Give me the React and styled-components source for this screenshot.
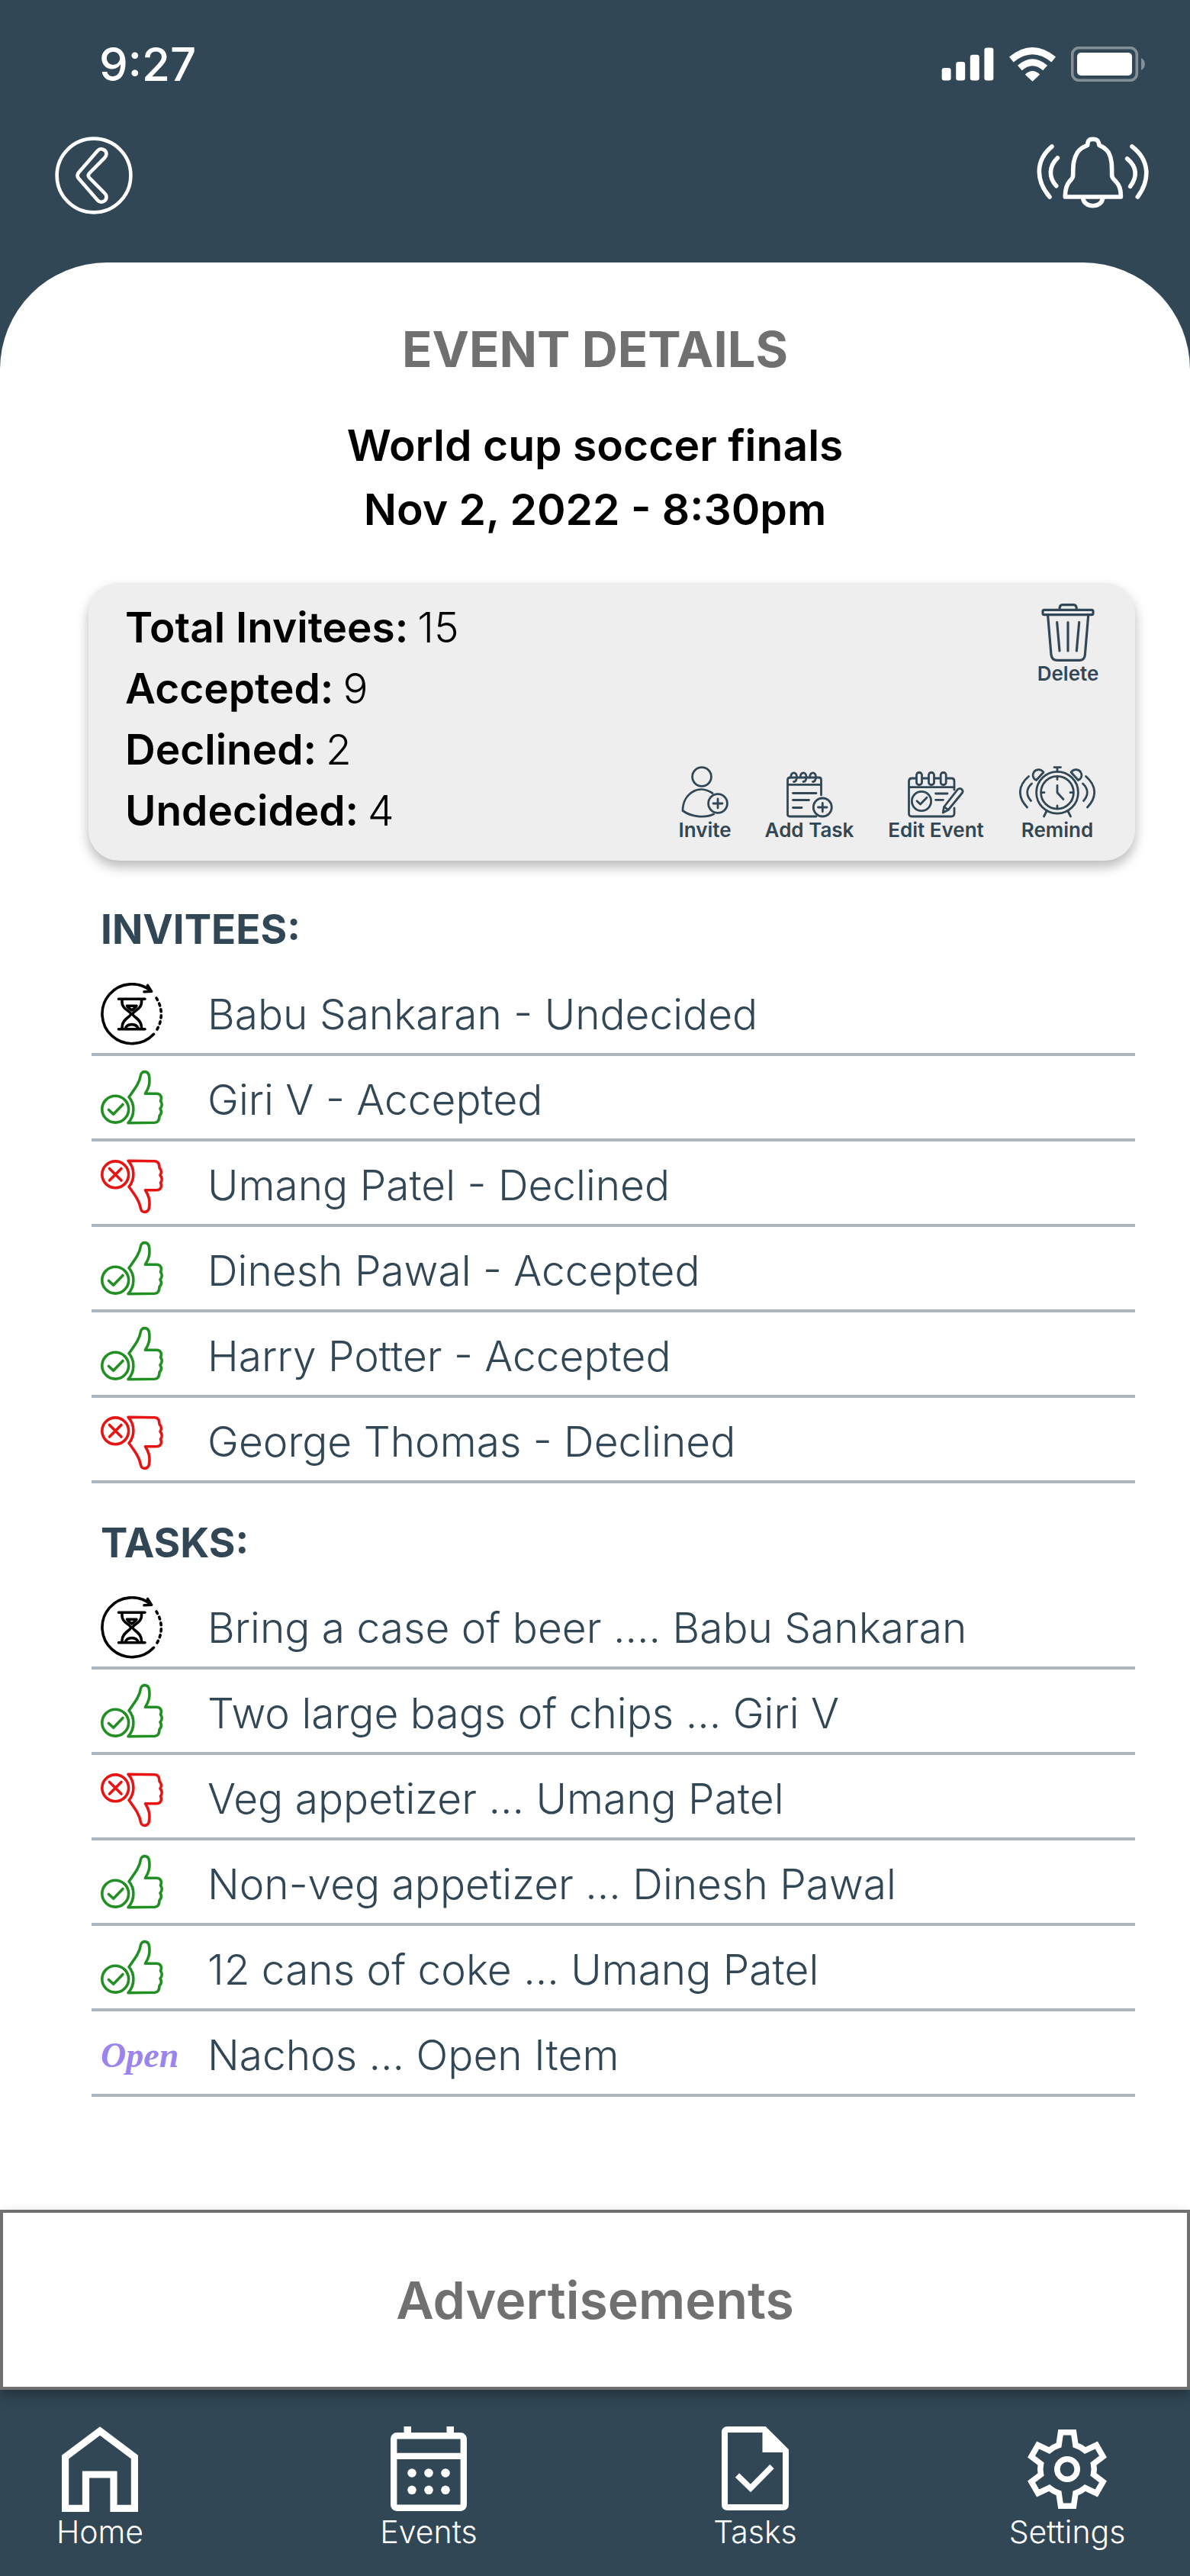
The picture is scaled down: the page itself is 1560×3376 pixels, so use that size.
import styled, { createGlobalStyle } from "styled-components";

const NAVY = "#314755";
const GREY = "#707070";

const invitees = [
    { status: "undecided", text: "Babu Sankaran - Undecided" },
    { status: "accepted", text: "Giri V - Accepted" },
    { status: "declined", text: "Umang Patel - Declined" },
    { status: "accepted", text: "Dinesh Pawal - Accepted" },
    { status: "accepted", text: "Harry Potter - Accepted" },
    { status: "declined", text: "George Thomas - Declined" },
];

const tasks = [
    { status: "undecided", text: "Bring a case of beer .... Babu Sankaran" },
    { status: "accepted", text: "Two large bags of chips ... Giri V" },
    { status: "declined", text: "Veg appetizer ... Umang Patel" },
    { status: "accepted", text: "Non-veg appetizer ... Dinesh Pawal" },
    { status: "accepted", text: "12 cans of coke ... Umang Patel" },
    { status: "open", text: "Nachos ... Open Item" },
];

const stats = [
    { label: "Total Invitees:", value: 15 },
    { label: "Accepted:", value: 9 },
    { label: "Declined:", value: 2 },
    { label: "Undecided:", value: 4 },
];

/* ---------- icons ---------- */

const SignalIcon = () => (
    <svg width="69" height="44" viewBox="222 186 208 132" fill="#fff">
        <rect x="224" y="267" width="36" height="50" rx="10" />
        <rect x="280" y="243" width="36" height="74" rx="10" />
        <rect x="336" y="215" width="36" height="102" rx="10" />
        <rect x="392" y="187" width="36" height="130" rx="10" />
    </svg>
);

const WifiIcon = () => (
    <svg width="63" height="45" viewBox="486 183 188 135" fill="none">
        <path d="M497 231Q580 163 663 231" stroke="#fff" strokeWidth="27" />
        <path d="M530 264Q580 220 630 264" stroke="#fff" strokeWidth="26" />
        <path d="M551 290Q580 262 609 290L580 317Z" fill="#fff" />
    </svg>
);

const BatteryIcon = () => (
    <svg width="98" height="46" viewBox="732 183 294 138" fill="none">
        <rect
            x="737"
            y="188"
            width="254"
            height="128"
            rx="27"
            stroke="#fff"
            strokeOpacity="0.4"
            strokeWidth="11"
        />
        <rect x="756" y="207" width="216" height="90" rx="15" fill="#fff" />
        <path d="M1008 228A27 27 0 0 1 1008 276Z" fill="#fff" fillOpacity="0.4" />
    </svg>
);

const BackIcon = () => (
    <svg width="102" height="102" viewBox="0 0 102 102" fill="none" stroke="#fff" strokeWidth="4.6">
        <circle cx="51" cy="51" r="48.4" />
        <path d="M56 18.5C60 14 67.5 17 67.5 22.8C67.5 25 66.5 26.5 65 28L45 48.2Q42.6 51 45 53.8L65 74C66.5 75.5 67.5 77 67.5 79.2C67.5 85 60 88 56 83.5L31 54.8Q28 51 31 47.2Z" />
    </svg>
);

const BellIcon = () => (
    <svg
        width="148"
        height="102"
        viewBox="597 537 444 306"
        fill="none"
        stroke="#fff"
        strokeWidth="17"
        strokeLinecap="round"
        strokeLinejoin="round"
    >
        <path d="M709 774H928C928 742 922 728 908 713C898 703 893 699 893 690C893 650 893 625 880 600C870 584 860 578 843 571C841 560 840 547 818 547C798 547 798 558 797 571C780 577 768 583 757 600C741 625 740 650 740 690C740 699 735 704 728 711C713 727 709 745 709 774Z" />
        <path d="M779 777C781 820 855 820 857 777" />
        <path d="M657 576C592 630 592 708 648 774" />
        <path d="M679 621C644 655 644 698 674 731" />
        <path d="M972 576C1042 630 1044 706 994 774" />
        <path d="M953 624C992 656 994 694 965 733" />
    </svg>
);

const TrashIcon = () => (
    <svg
        width="70"
        height="76"
        viewBox="201 93 210 228"
        fill="none"
        stroke={NAVY}
        strokeWidth="9.5"
        strokeLinecap="round"
    >
        <rect x="207" y="118" width="198" height="19" rx="6" />
        <path d="M273 115Q273 98 285 98H328Q340 98 340 115" />
        <path d="M227 140L240 295Q243 316 262 316H350Q371 316 373 295L386 140" />
        <path d="M263 167L273 279M306 167V279M350 167L340 279" />
    </svg>
);

const ActionSvg = ({ width, height, children }) => (
    <svg
        width={width}
        height={height}
        viewBox={`0 0 ${width} ${height}`}
        fill="none"
        stroke={NAVY}
        strokeWidth="2.8"
        strokeLinecap="round"
        strokeLinejoin="round"
    >
        {children}
    </svg>
);

const InviteIcon = () => (
    <ActionSvg width={62} height={68}>
        <circle cx="27" cy="14" r="12.4" />
        <path d="M41 35.5C22 22.5 2 37 2 58.5C13 66.5 31 68.5 42.5 63" />
        <circle cx="48" cy="49" r="12.4" />
        <path d="M42 49H54M48 43V55" />
    </ActionSvg>
);

const AddTaskIcon = () => (
    <ActionSvg width={61} height={61}>
        <path d="M45.5 31V11Q45.5 8 42.5 8H4.5Q1.5 8 1.5 11V56Q1.5 59 4.5 59H39M2 17.3H45" />
        <path d="M5.5 8C6 0 13.5 0 13.5 7C13.5 11 12.5 13.5 9.5 13.5M18 8C18.5 0 26 0 26 7C26 11 25 13.5 22 13.5M30.5 8C31 0 38.5 0 38.5 7C38.5 11 37.5 13.5 34.5 13.5" />
        <path d="M8.5 28.5H39M8.5 37.5H29.5M8.5 47.5H20" />
        <circle cx="47.3" cy="47" r="12" />
        <path d="M41.5 47H53M47.3 41.3V52.7" />
    </ActionSvg>
);

const EditEventIcon = () => (
    <ActionSvg width={74} height={61}>
        <path d="M10 9H5Q1.5 9 1.5 13V55Q1.5 59 5.5 59H57Q61 59 61 55V48M61 24V13Q61 9 57.5 9H52M20 9H26.5M35.5 9H42M2 20.7H60.5" />
        <rect x="11.5" y="1.5" width="7" height="16" rx="3" />
        <rect x="27.5" y="1.5" width="7" height="16" rx="3" />
        <rect x="43.2" y="1.5" width="7" height="16" rx="3" />
        <circle cx="18" cy="39" r="12.6" />
        <path d="M12 38.8L16.5 43L25 34.2M36.5 29H52M36.5 37.3H46.5" />
        <path d="M46.2 54L47.5 46.5L65.5 23.5C69 20.5 73.5 24.5 71.5 28L53 50.5ZM48 46.5L52.5 50" />
    </ActionSvg>
);

const RemindIcon = () => (
    <ActionSvg width={100} height={68}>
        <circle cx="50" cy="34.7" r="27.4" />
        <circle cx="50" cy="34.7" r="21.4" />
        <path d="M46 1.6H54.5M50 2V7M50 14V17.5M50 52V55.5M29.5 34.7H33M67 34.7H70.5" />
        <path d="M50 25.5V34.7L58 43.5M36 59L32.5 66M64 59L67.5 66" />
        <path d="M32 8C28 3 21 4 18.8 9C17 13 19 17 22.5 18.5Z" />
        <path d="M68 8C72 3 79 4 81.2 9C83 13 81 17 77.5 18.5Z" />
        <path d="M12.5 13.5C-2 26 -2 41 10.5 54M16.5 23C9 30 9 38 15.5 45.5" />
        <path d="M87.5 13.5C102 26 102 41 89.5 54M83.5 23C91 30 91 38 84.5 45.5" />
    </ActionSvg>
);

const StatusSvg = ({ color, children }) => (
    <svg
        width="82"
        height="82"
        viewBox="0 0 82 82"
        fill="none"
        stroke={color}
        strokeWidth="3.6"
        strokeLinecap="round"
        strokeLinejoin="round"
    >
        {children}
    </svg>
);

const UndecidedIcon = () => (
    <StatusSvg color="#000">
        <path d="M69.5 67.3A39 39 0 1 1 66 10.8M61.5 3.5L66.5 11.3L57 11.8" />
        <path d="M73 20A39 39 0 0 1 72 64" strokeDasharray="3 5" />
        <path d="M23.5 21.3H58M23.5 60.7H58" />
        <path d="M28 22V26C28 35 39.5 37 39.5 41C39.5 45 28 47 28 58V60M53.5 22V26C53.5 35 42 37 42 41C42 45 53.5 47 53.5 58V60" />
        <path d="M34.5 30.2H47C46 33 43 34 40.8 36C38.5 34 35.5 33 34.5 30.2Z" />
        <path d="M32.5 59.5C35 53 46.5 53 49 59.5" />
    </StatusSvg>
);

const HAND =
    "M37 37.7C47 24 51 18 52.5 9C53.5 3 62 3 63.5 10C65 20 63 26 58.5 33.3H73C79 33.3 80.5 38 78.5 43C81 46 80.5 50 78 53C80.5 57 79.5 60 77 62.5C77 68 75 71 71 71.2L36 71.7C45 62 45 47 37 37.7Z";

const AcceptedIcon = () => (
    <StatusSvg color="#228f22">
        <circle cx="19.2" cy="53.7" r="17.4" />
        <path d="M10.5 54.5L16.7 60.3L29 47.5" />
        <path d={HAND} />
    </StatusSvg>
);

const DeclinedIcon = () => (
    <StatusSvg color="#e81414">
        <circle cx="19.2" cy="27.3" r="17.4" />
        <path d="M11.5 19.5L27 35M27 19.5L11.5 35" />
        <path d={HAND} transform="matrix(1 0 0 -1 0 81)" />
    </StatusSvg>
);

const HomeIcon = () => (
    <svg width="100" height="112" viewBox="0 0 100 112" fill="none" stroke="#fff" strokeWidth="9.2">
        <path d="M50 6L95.4 40V107.4H68V63H31.5V107.4H4.6V40Z" />
    </svg>
);

const EventsIcon = () => (
    <svg width="100" height="112" viewBox="0 0 100 112" fill="#fff">
        <rect x="4.2" y="12.2" width="91.6" height="94.6" rx="4" fill="none" stroke="#fff" strokeWidth="8.4" />
        <path d="M4 34.7H96V43H4ZM17.5 0H27V10H17.5ZM73.5 0H83V10H73.5Z" />
        {[28, 50, 72].map((cx) => (
            <g key={cx}>
                <circle cx={cx} cy="61" r="5.8" />
                <circle cx={cx} cy="83.3" r="5.8" />
            </g>
        ))}
    </svg>
);

const TasksIcon = () => (
    <svg width="88" height="112" viewBox="0 0 88 112" fill="none">
        <path
            d="M8 4H56L84 32V102Q84 106 80 106H8Q4 106 4 102V8Q4 4 8 4Z"
            stroke="#fff"
            strokeWidth="8"
        />
        <path d="M53.5 3H57L86 32V34H53.5Z" fill="#fff" />
        <path d="M20.5 64L38 81L66 52.5" stroke="#fff" strokeWidth="7.5" />
    </svg>
);

const SettingsIcon = () => (
    <svg width="104" height="112" viewBox="0 -4 104 112" fill="none" stroke="#fff" strokeWidth="7.6">
        <path d="M43.5 3.8H60.5L63 20.5Q69.5 22.5 75.5 27.5L90.3 20.5L99 35.5L86.5 45Q88 52 86.5 59L99 68.5L90.3 83.5L75.5 76.5Q69.5 81.5 63 83.5L60.5 100.2H43.5L41 83.5Q34.5 81.5 28.5 76.5L13.7 83.5L5 68.5L17.5 59Q16 52 17.5 45L5 35.5L13.7 20.5L28.5 27.5Q34.5 22.5 41 20.5Z" />
        <circle cx="52" cy="52" r="13.2" />
    </svg>
);

/* ---------- pieces ---------- */

const StatusMark = ({ status }) => {
    if (status === "accepted") return <AcceptedIcon />;
    if (status === "declined") return <DeclinedIcon />;
    if (status === "undecided") return <UndecidedIcon />;
    return <OpenMark>Open</OpenMark>;
};

const ListSection = ({ title, items }) => (
    <Section>
        <SectionTitle>{title}</SectionTitle>
        <List>
            {items.map((item) => (
                <Row key={item.text}>
                    <MarkCell>
                        <StatusMark status={item.status} />
                    </MarkCell>
                    <RowText>{item.text}</RowText>
                </Row>
            ))}
        </List>
    </Section>
);

const App = () => {
    return (
        <>
            <GlobalStyle />
            <Page>
                <StatusBar>
                    <Clock>9:27</Clock>
                    <StatusIcons>
                        <SignalIcon />
                        <WifiIcon />
                        <BatteryIcon />
                    </StatusIcons>
                </StatusBar>
                <TopBar>
                    <IconButton aria-label="Back">
                        <BackIcon />
                    </IconButton>
                    <IconButton aria-label="Notifications">
                        <BellIcon />
                    </IconButton>
                </TopBar>
                <Sheet>
                    <Title>EVENT DETAILS</Title>
                    <EventInfo>
                        <p>World cup soccer finals</p>
                        <p>Nov 2, 2022 - 8:30pm</p>
                    </EventInfo>
                    <Summary>
                        <Stats>
                            {stats.map((stat) => (
                                <Stat key={stat.label}>
                                    <dt>{stat.label}</dt>
                                    <dd>{stat.value}</dd>
                                </Stat>
                            ))}
                        </Stats>
                        <Controls>
                            <ActionButton $width={80}>
                                <TrashIcon />
                                Delete
                            </ActionButton>
                            <Actions>
                                <ActionButton $width={68}>
                                    <InviteIcon />
                                    Invite
                                </ActionButton>
                                <ActionButton $width={114}>
                                    <AddTaskIcon />
                                    Add Task
                                </ActionButton>
                                <ActionButton $width={126}>
                                    <EditEventIcon />
                                    Edit Event
                                </ActionButton>
                                <ActionButton $width={100}>
                                    <RemindIcon />
                                    Remind
                                </ActionButton>
                            </Actions>
                        </Controls>
                    </Summary>
                    <ListSection title="INVITEES:" items={invitees} />
                    <ListSection title="TASKS:" items={tasks} />
                    <AdBanner>Advertisements</AdBanner>
                </Sheet>
                <BottomNav>
                    <NavLink href="#home">
                        <HomeIcon />
                        Home
                    </NavLink>
                    <NavLink href="#events">
                        <EventsIcon />
                        Events
                    </NavLink>
                    <NavLink href="#tasks">
                        <TasksIcon />
                        Tasks
                    </NavLink>
                    <NavLink href="#settings">
                        <SettingsIcon />
                        Settings
                    </NavLink>
                </BottomNav>
            </Page>
        </>
    );
};

const GlobalStyle = createGlobalStyle`
    * {
        box-sizing: border-box;
        margin: 0;
        padding: 0;
    }

    body {
        background: ${NAVY};
        font-family: "Inter", sans-serif;
    }

    svg {
        display: block;
        flex-shrink: 0;
    }
`;

const Page = styled.div`
    display: flex;
    flex-direction: column;
    background: ${NAVY};
`;

const StatusBar = styled.div`
    display: flex;
    align-items: center;
    justify-content: space-between;
    height: 168px;
    padding: 0 58px 0 130px;
`;

const Clock = styled.span`
    color: #fff;
    font-size: 60px;
    font-weight: 500;
`;

const StatusIcons = styled.div`
    display: flex;
    align-items: center;
    gap: 19px;
`;

const TopBar = styled.header`
    display: flex;
    align-items: center;
    justify-content: space-between;
    padding: 11px 53px 63px 72px;
`;

const IconButton = styled.button`
    border: none;
    background: none;
    cursor: pointer;
`;

const Sheet = styled.main`
    display: flex;
    flex-direction: column;
    padding-top: 74px;
    border-radius: 140px 140px 0 0;
    background: #fff;
`;

const Title = styled.h1`
    color: ${GREY};
    font-size: 65px;
    font-weight: 700;
    line-height: 80px;
    text-align: center;
`;

const EventInfo = styled.div`
    margin: 44px 0 54px;
    font-size: 57px;
    font-weight: 600;
    line-height: 84px;
    text-align: center;
`;

const Summary = styled.section`
    display: flex;
    justify-content: space-between;
    margin: 0 72px 12px 116px;
    padding: 18px 48px 26px;
    border-radius: 40px;
    background: #eee;
    box-shadow: 0 8px 16px rgba(0, 0, 0, 0.28);
`;

const Stats = styled.dl`
    font-size: 55px;
    line-height: 80px;
`;

const Stat = styled.div`
    display: flex;
    gap: 12px;

    dt {
        font-weight: 600;
    }

    dd {
        font-weight: 300;
    }
`;

const Controls = styled.div`
    display: flex;
    flex-direction: column;
    align-items: flex-end;
    justify-content: space-between;
    padding-top: 9px;
`;

const Actions = styled.div`
    display: flex;
    align-items: flex-end;
    gap: 46px;
    margin-right: 4px;
`;

const ActionButton = styled.button`
    display: flex;
    flex-direction: column;
    align-items: center;
    gap: 2px;
    width: ${(props) => props.$width}px;
    border: none;
    background: none;
    color: ${NAVY};
    font: 600 26px/28px "Inter", sans-serif;
    white-space: nowrap;
    cursor: pointer;
`;

const Section = styled.section`
    margin: 0 72px 0 120px;
    padding-top: 46px;
`;

const SectionTitle = styled.h2`
    margin-bottom: 22px;
    padding-left: 12px;
    color: ${NAVY};
    font-size: 53px;
    font-weight: 700;
    line-height: 64px;
`;

const List = styled.ul`
    list-style: none;
`;

const Row = styled.li`
    display: flex;
    align-items: center;
    height: 112px;
    padding: 6px 0 0 12px;
    border-bottom: 4px solid #adb6bd;
`;

const MarkCell = styled.div`
    flex: 0 0 140px;
`;

const OpenMark = styled.span`
    color: #9b84ee;
    font-family: "Liberation Serif", serif;
    font-size: 46px;
    font-style: italic;
    font-weight: 700;
`;

const RowText = styled.span`
    color: ${NAVY};
    font-size: 55px;
    font-weight: 300;
    white-space: nowrap;
`;

const AdBanner = styled.aside`
    position: relative;
    margin-top: 148px;
    padding: 74px 0;
    border: 4px solid ${GREY};
    background: #fff;
    box-shadow: 0 8px 16px rgba(0, 0, 0, 0.28);
    color: ${GREY};
    font-size: 68px;
    font-weight: 600;
    line-height: 80px;
    text-align: center;
`;

const BottomNav = styled.nav`
    display: grid;
    grid-template-columns: 431fr 428fr 409fr 160px;
    padding: 48px 81px 34px 51px;
`;

const NavLink = styled.a`
    display: flex;
    flex-direction: column;
    align-items: center;
    gap: 2px;
    width: 160px;
    color: #fff;
    font-size: 41px;
    font-weight: 300;
    line-height: 48px;
    text-decoration: none;
`;

export default App;
